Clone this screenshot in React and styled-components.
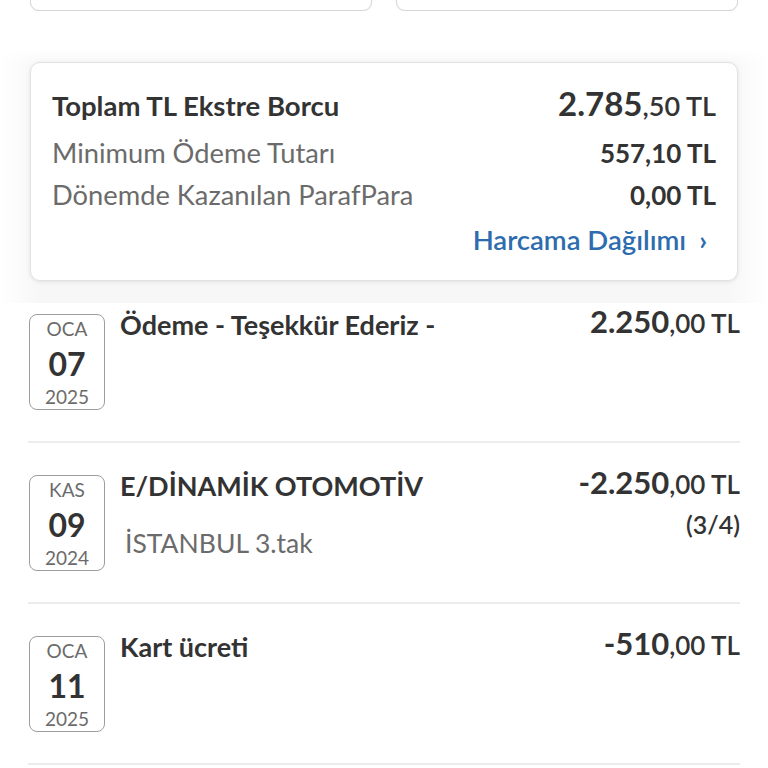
import React from "react";
import styled, { createGlobalStyle } from "styled-components";

const GlobalStyle = createGlobalStyle`
  body {
    margin: 0;
    background: #ffffff;
    font-family: Lato, "Noto Sans", sans-serif;
    color: #333;
  }
  * {
    box-sizing: border-box;
  }
`;

const summary = [
  { label: "Minimum Ödeme Tutarı", value: "557,10 TL", gap: 13 },
  { label: "Dönemde Kazanılan ParafPara", value: "0,00 TL", gap: 8 },
];

const transactions = [
  {
    month: "OCA",
    day: "07",
    year: "2025",
    title: "Ödeme - Teşekkür Ederiz -",
    whole: "2.250",
    cents: ",00 TL",
  },
  {
    month: "KAS",
    day: "09",
    year: "2024",
    title: "E/DİNAMİK OTOMOTİV",
    sub: "İSTANBUL 3.tak",
    whole: "-2.250",
    cents: ",00 TL",
    note: "(3/4)",
  },
  {
    month: "OCA",
    day: "11",
    year: "2025",
    title: "Kart ücreti",
    whole: "-510",
    cents: ",00 TL",
  },
];

const App = () => {
  return (
    <Page>
      <GlobalStyle />
      <TopStrip>
        <TopCard />
        <TopCard />
      </TopStrip>

      <SummaryBand>
        <SummaryCard>
          <SummaryRow>
            <TotalLabel>Toplam TL Ekstre Borcu</TotalLabel>
            <TotalValue>
              <strong>2.785</strong>,50 TL
            </TotalValue>
          </SummaryRow>
          {summary.map(({ label, value, gap }) => (
            <SummaryRow key={label} gap={gap}>
              <Label>{label}</Label>
              <Value>{value}</Value>
            </SummaryRow>
          ))}
          <LinkRow>
            <BlueLink>
              Harcama Dağılımı <Chevron>›</Chevron>
            </BlueLink>
          </LinkRow>
        </SummaryCard>
      </SummaryBand>

      <List>
        {transactions.map((t, i) => (
          <Item key={t.title} first={i === 0}>
            <DateBox>
              <Month>{t.month}</Month>
              <Day>{t.day}</Day>
              <Year>{t.year}</Year>
            </DateBox>
            <Info>
              <Title>{t.title}</Title>
              {t.sub && <Sub>{t.sub}</Sub>}
            </Info>
            <Amount>
              <AmountLine>
                <strong>{t.whole}</strong>
                {t.cents}
              </AmountLine>
              {t.note && <Note>{t.note}</Note>}
            </Amount>
          </Item>
        ))}
      </List>
    </Page>
  );
};

const Page = styled.div`
  width: 768px;
  height: 768px;
  overflow: hidden;
`;

const TopStrip = styled.div`
  display: flex;
  gap: 24px;
  padding: 0 30px;
  height: 11px;
  align-items: flex-end;
  overflow: hidden;
`;

const TopCard = styled.div`
  flex: 1;
  height: 40px;
  flex-shrink: 0;
  border: 1.5px solid #d6d6d6;
  border-radius: 9px;
  box-shadow: 0 1px 2px rgba(0, 0, 0, 0.06);
  background: #fff;
`;

const SummaryBand = styled.div`
  margin-top: 38px;
  padding: 13px 30px 22px;
  background:
    linear-gradient(to bottom, #ffffff 0px, rgba(255, 255, 255, 0) 16px),
    linear-gradient(
      to right,
      #ffffff 0px,
      #f7f7f7 40px,
      #f7f7f7 calc(100% - 40px),
      #ffffff 100%
    );
`;

const SummaryCard = styled.div`
  background: #fff;
  border: 1px solid #e2e2e2;
  border-radius: 10px;
  box-shadow: 0 1px 4px rgba(0, 0, 0, 0.09);
  padding: 23px 21px 23px 21px;
  display: flex;
  flex-direction: column;
`;

const SummaryRow = styled.div`
  display: flex;
  justify-content: space-between;
  align-items: baseline;
  line-height: 34px;
  margin-top: ${(p) => p.gap || 0}px;
`;

const TotalLabel = styled.span`
  font-size: 27.5px;
  font-weight: 700;
  color: #333;
`;

const TotalValue = styled.span`
  font-size: 27px;
  font-weight: 600;
  color: #333;

  strong {
    font-size: 33px;
    font-weight: 700;
  }
`;

const Label = styled.span`
  font-size: 27.3px;
  color: #6b6b6b;
`;

const Value = styled.span`
  font-size: 26px;
  font-weight: 700;
  color: #333;
`;

const LinkRow = styled.div`
  display: flex;
  justify-content: flex-end;
  margin-top: 11px;
  padding-right: 9px;
  line-height: 34px;
`;

const BlueLink = styled.span`
  font-size: 27.5px;
  font-weight: 600;
  color: #2d6cae;
  display: flex;
  align-items: center;
  gap: 13px;
`;

const Chevron = styled.span`
  font-size: 27px;
  font-weight: 700;
`;

const List = styled.div`
  padding: 0 28px;
`;

const Item = styled.div`
  display: flex;
  align-items: flex-start;
  padding: ${(p) => (p.first ? "11px" : "32px")} 0 31px 1px;
  border-bottom: 2px solid #ececec;
`;

const DateBox = styled.div`
  width: 76px;
  height: 96px;
  border: 1px solid #9d9d9d;
  border-radius: 8px;
  display: flex;
  flex-direction: column;
  align-items: center;
  flex-shrink: 0;
`;

const Month = styled.span`
  font-size: 19px;
  color: #6b6b6b;
  line-height: 28px;
`;

const Day = styled.span`
  font-size: 32px;
  font-weight: 700;
  color: #333;
  line-height: 36px;
  margin-top: 3px;
`;

const Year = styled.span`
  font-size: 19px;
  color: #6b6b6b;
  line-height: 28px;
  margin-top: 1px;
`;

const Info = styled.div`
  flex: 1;
  padding-left: 15px;
  display: flex;
  flex-direction: column;
`;

const Title = styled.span`
  font-size: 27px;
  font-weight: 700;
  color: #333;
  line-height: 22px;
`;

const Sub = styled.span`
  font-size: 26.5px;
  color: #6b6b6b;
  line-height: 30px;
  margin-top: 31px;
  padding-left: 5px;
`;

const Amount = styled.div`
  display: flex;
  flex-direction: column;
  align-items: flex-end;
  margin-top: -3px;
`;

const AmountLine = styled.span`
  font-size: 26px;
  font-weight: 600;
  color: #333;
  line-height: 20px;

  strong {
    font-size: 31px;
    font-weight: 700;
  }
`;

const Note = styled.span`
  font-size: 25px;
  font-weight: 600;
  color: #333;
  line-height: 28px;
  margin-top: 16px;
`;

export default App;
